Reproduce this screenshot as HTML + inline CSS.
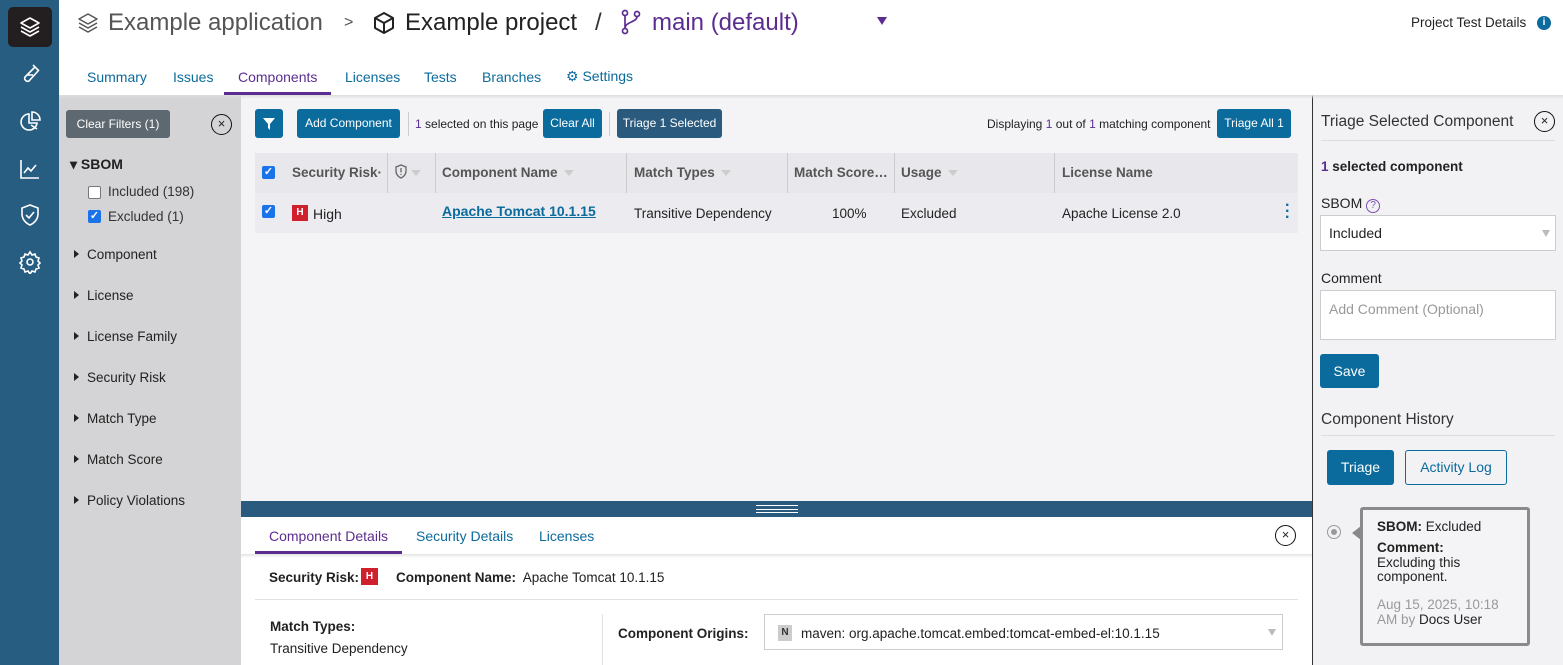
<!DOCTYPE html>
<html><head><meta charset="utf-8"><style>
*{box-sizing:border-box;margin:0;padding:0}
body{width:1563px;height:665px;overflow:hidden;font-family:"Liberation Sans",sans-serif;font-size:13px;color:#222;background:#fff;position:relative}
.a{position:absolute;white-space:nowrap}
.btn{position:absolute;background:#0b6b9c;color:#fff;border-radius:3px;font-size:12px;text-align:center}
.pur{color:#5c2d91}
.lnk{color:#0b6b9c}
.cb{position:absolute;width:13px;height:13px;border-radius:2px;background:#1a73e8;color:#fff;font-size:11px;line-height:13px;text-align:center;font-weight:bold}
.cbe{position:absolute;width:13px;height:13px;border:1px solid #777;border-radius:2px;background:#fff}
.th{position:absolute;top:165px;font-weight:bold;color:#555;font-size:13.5px}
.sep{position:absolute;top:153px;width:1px;height:40px;background:#ccc}
.tri{display:inline-block;width:0;height:0;border-left:5px solid transparent;border-right:5px solid transparent;border-top:6px solid #ccc;vertical-align:middle;margin-left:6px}
.fi{position:absolute;left:74px;font-size:13.5px;color:#222}
.fi:before{content:"";display:inline-block;border-top:4px solid transparent;border-bottom:4px solid transparent;border-left:5px solid #222;margin-right:8px;vertical-align:1px}
.xc{position:absolute;width:21px;height:21px;border:1.5px solid #111;border-radius:50%;text-align:center;line-height:17px;font-size:13px}
</style></head><body>
<!-- sidebar -->
<div class="a" style="left:0;top:0;width:59px;height:665px;background:#265d80"></div>
<div class="a" style="left:8px;top:7px;width:44px;height:40px;background:#231f20;border-radius:5px"></div>
<svg class="a" style="left:18px;top:15px" width="24" height="24" viewBox="0 0 24 24" fill="none" stroke="#fff" stroke-width="1.6" stroke-linejoin="round"><path d="M12 3 21 8 12 13 3 8Z"/><path d="M3 12l9 5 9-5"/><path d="M3 16l9 5 9-5"/></svg>
<svg class="a" style="left:18px;top:62px" width="24" height="24" viewBox="0 0 24 24" fill="none" stroke="#fff" stroke-width="1.6"><path d="M15 3l6 6M17 5 7 15a3 3 0 0 0 4 4L20 9M9 13h6"/></svg>
<svg class="a" style="left:18px;top:110px" width="24" height="24" viewBox="0 0 24 24" fill="none" stroke="#fff" stroke-width="1.6"><path d="M11 4a8 8 0 1 0 8 9h-8z"/><path d="M14 2v8h8a8 8 0 0 0-8-8z"/><path d="M13 15l6 4"/></svg>
<svg class="a" style="left:18px;top:157px" width="24" height="24" viewBox="0 0 24 24" fill="none" stroke="#fff" stroke-width="1.6"><path d="M3 3v18h18"/><path d="M6 16l4-5 3 3 5-6"/></svg>
<svg class="a" style="left:18px;top:203px" width="24" height="24" viewBox="0 0 24 24" fill="none" stroke="#fff" stroke-width="1.6"><path d="M12 2l8 3v6c0 5-3.5 9-8 11-4.5-2-8-6-8-11V5z"/><path d="M8 12l3 3 5-6"/></svg>
<svg class="a" style="left:18px;top:250px" width="24" height="24" viewBox="0 0 24 24" fill="none" stroke="#fff" stroke-width="1.6"><circle cx="12" cy="12" r="3"/><path d="M12 2l2 3 3-1 1 3 3 1-1 3 2 2-2 2 1 3-3 1-1 3-3-1-2 3-2-3-3 1-1-3-3-1 1-3-2-2 2-2-1-3 3-1 1-3 3 1z"/></svg>
<!-- header -->
<svg class="a" style="left:76px;top:11px" width="24" height="24" viewBox="0 0 24 24" fill="none" stroke="#555" stroke-width="1.5" stroke-linejoin="round"><path d="M12 3 21 8 12 13 3 8Z"/><path d="M3 12l9 5 9-5"/><path d="M3 16l9 5 9-5"/></svg>
<div class="a" style="left:108px;top:9px;font-size:24px;color:#555">Example application</div>
<div class="a" style="left:344px;top:14px;font-size:16px;color:#555">&gt;</div>
<svg class="a" style="left:372px;top:11px" width="24" height="24" viewBox="0 0 24 24" fill="none" stroke="#222" stroke-width="2" stroke-linejoin="round"><path d="M12 2 21 7v10l-9 5-9-5V7z"/><path d="M3 7l9 5 9-5M12 12v10"/></svg>
<div class="a" style="left:405px;top:9px;font-size:24px;color:#222">Example project</div>
<div class="a" style="left:595px;top:9px;font-size:24px;color:#333">/</div>
<svg class="a" style="left:619px;top:9px" width="24" height="26" viewBox="0 0 24 26" fill="none" stroke="#5c2d91" stroke-width="1.7"><circle cx="6" cy="4" r="2.5"/><circle cx="6" cy="22" r="2.5"/><circle cx="18" cy="5" r="2.5"/><path d="M6 6.5v13M18 7.5c0 6-12 5-12 12"/></svg>
<div class="a pur" style="left:652px;top:9px;font-size:24px">main (default)</div>
<div class="a" style="left:877px;top:17px;border-left:5px solid transparent;border-right:5px solid transparent;border-top:8px solid #5c2d91"></div>
<div class="a" style="left:1411px;top:15px;font-size:13.5px">Project Test Details</div>
<div class="a" style="left:1537px;top:16px;width:14px;height:14px;border-radius:50%;background:#0b6b9c;color:#fff;font-size:10px;font-weight:bold;text-align:center;line-height:14px">i</div>
<div class="a lnk" style="left:87px;top:69px;font-size:14px">Summary</div>
<div class="a lnk" style="left:173px;top:69px;font-size:14px">Issues</div>
<div class="a pur" style="left:238px;top:69px;font-size:14px">Components</div>
<div class="a" style="left:224px;top:92px;width:107px;height:3px;background:#5c2d91"></div>
<div class="a lnk" style="left:345px;top:69px;font-size:14px">Licenses</div>
<div class="a lnk" style="left:424px;top:69px;font-size:14px">Tests</div>
<div class="a lnk" style="left:482px;top:69px;font-size:14px">Branches</div>
<div class="a lnk" style="left:566px;top:68px;font-size:14px">⚙ Settings</div>
<div class="a" style="left:59px;top:95px;width:1504px;height:4px;background:linear-gradient(#ddd,transparent);z-index:2"></div>
<!-- filter panel -->
<div class="a" style="left:59px;top:95px;width:182px;height:570px;background:#d4d3d5"></div>
<div class="a" style="left:66px;top:110px;width:104px;height:28px;background:#5d6870;border-radius:3px;color:#fff;font-size:12px;text-align:center;line-height:28px">Clear Filters (1)</div>
<div class="xc" style="left:211px;top:114px">×</div>
<div class="a" style="left:70px;top:156px;font-weight:bold;font-size:14px">▾ SBOM</div>
<div class="cbe" style="left:88px;top:186px"></div><div class="a" style="left:108px;top:184px;font-size:13.5px;color:#333">Included (198)</div>
<div class="cb" style="left:88px;top:210px">✓</div><div class="a" style="left:108px;top:209px;font-size:13.5px;color:#333">Excluded (1)</div>
<div class="fi" style="top:247px">Component</div>
<div class="fi" style="top:288px">License</div>
<div class="fi" style="top:329px">License Family</div>
<div class="fi" style="top:370px">Security Risk</div>
<div class="fi" style="top:411px">Match Type</div>
<div class="fi" style="top:452px">Match Score</div>
<div class="fi" style="top:493px">Policy Violations</div>
<!-- main -->
<div class="a" style="left:241px;top:95px;width:1071px;height:406px;background:#f4f4f7"></div>
<div class="btn" style="left:255px;top:109px;width:28px;height:29px"><svg width="14" height="14" style="margin-top:8px" viewBox="0 0 14 14"><path d="M1 1h12L8 7v6L6 11V7z" fill="#fff"/></svg></div>
<div class="btn" style="left:297px;top:109px;width:103px;height:29px;line-height:29px">Add Component</div>
<div class="a" style="left:408px;top:112px;width:1px;height:24px;background:#ccc"></div>
<div class="a" style="left:415px;top:117px;font-size:12px"><span class="pur">1</span> selected on this page</div>
<div class="btn" style="left:543px;top:109px;width:59px;height:29px;line-height:29px">Clear All</div>
<div class="a" style="left:609px;top:112px;width:1px;height:24px;background:#ccc"></div>
<div class="btn" style="left:617px;top:109px;width:105px;height:29px;line-height:29px;background:#2a5b7e">Triage 1 Selected</div>
<div class="a" style="left:987px;top:117px;font-size:12px">Displaying <span class="pur">1</span> out of <span class="pur">1</span> matching component</div>
<div class="btn" style="left:1217px;top:109px;width:74px;height:29px;line-height:29px">Triage All 1</div>
<div class="a" style="left:255px;top:153px;width:1043px;height:40px;background:#e8e8ec"></div>
<div class="a" style="left:255px;top:193px;width:1043px;height:40px;background:#ececf0"></div>
<div class="cb" style="left:262px;top:166px">✓</div>
<div class="th" style="left:292px">Security Risk·</div>
<div class="sep" style="left:387px"></div>
<svg class="a" style="left:394px;top:164px" width="14" height="15" viewBox="0 0 14 15" fill="none" stroke="#666" stroke-width="1.3"><path d="M7 1l5 2v4c0 3.5-2.5 6-5 7-2.5-1-5-3.5-5-7V3z"/><path d="M7 4v4.5M7 10v1"/></svg>
<div class="a" style="left:411px;top:170px;border-left:5px solid transparent;border-right:5px solid transparent;border-top:6px solid #ccc"></div>
<div class="sep" style="left:435px"></div>
<div class="th" style="left:442px">Component Name<span class="tri"></span></div>
<div class="sep" style="left:626px"></div>
<div class="th" style="left:634px">Match Types<span class="tri"></span></div>
<div class="sep" style="left:787px"></div>
<div class="th" style="left:794px">Match Score…</div>
<div class="sep" style="left:894px"></div>
<div class="th" style="left:901px">Usage<span class="tri"></span></div>
<div class="sep" style="left:1054px"></div>
<div class="th" style="left:1062px">License Name</div>
<div class="cb" style="left:262px;top:205px">✓</div>
<div class="a" style="left:292px;top:205px;width:16px;height:16px;background:#d0202e;color:#fff;font-size:10px;font-weight:bold;text-align:center;line-height:16px">H</div>
<div class="a" style="left:313px;top:206px;font-size:14px">High</div>
<div class="a lnk" style="left:442px;top:203px;font-size:14px;font-weight:bold;text-decoration:underline">Apache Tomcat 10.1.15</div>
<div class="a" style="left:634px;top:206px;font-size:13.5px">Transitive Dependency</div>
<div class="a" style="left:832px;top:206px;font-size:13.5px">100%</div>
<div class="a" style="left:901px;top:206px;font-size:13.5px">Excluded</div>
<div class="a" style="left:1062px;top:206px;font-size:13.5px">Apache License 2.0</div>
<div class="a lnk" style="left:1285px;top:203px;font-size:16px;font-weight:bold;line-height:6px">·<br>·<br>·</div>
<!-- divider -->
<div class="a" style="left:241px;top:501px;width:1071px;height:16px;background:#2a5b7e"></div>
<div class="a" style="left:756px;top:505px;width:42px;height:8px;border-top:1.5px solid #fff;border-bottom:1.5px solid #fff"></div>
<div class="a" style="left:756px;top:508.5px;width:42px;height:1.5px;background:#fff"></div>
<!-- bottom -->
<div class="a pur" style="left:269px;top:528px;font-size:14px">Component Details</div>
<div class="a" style="left:255px;top:551px;width:147px;height:3px;background:#5c2d91"></div>
<div class="a lnk" style="left:416px;top:528px;font-size:14px">Security Details</div>
<div class="a lnk" style="left:539px;top:528px;font-size:14px">Licenses</div>
<div class="xc" style="left:1275px;top:525px">×</div>
<div class="a" style="left:241px;top:554px;width:1071px;height:4px;background:linear-gradient(#e4e4e4,transparent)"></div>
<div class="a" style="left:269px;top:570px;font-weight:bold;font-size:13.5px">Security Risk:</div>
<div class="a" style="left:361px;top:568px;width:17px;height:17px;background:#d0202e;color:#fff;font-size:10px;font-weight:bold;text-align:center;line-height:17px">H</div>
<div class="a" style="left:396px;top:570px;font-size:13.5px"><b>Component Name:</b>&nbsp; Apache Tomcat 10.1.15</div>
<div class="a" style="left:255px;top:599px;width:1043px;height:1px;background:#e2e2e2"></div>
<div class="a" style="left:270px;top:619px;font-weight:bold;font-size:13.5px">Match Types:</div>
<div class="a" style="left:270px;top:641px;font-size:13.5px">Transitive Dependency</div>
<div class="a" style="left:602px;top:614px;width:1px;height:51px;background:#e2e2e2"></div>
<div class="a" style="left:618px;top:626px;font-weight:bold;font-size:13.5px">Component Origins:</div>
<div class="a" style="left:764px;top:614px;width:519px;height:36px;border:1px solid #ccc;background:#fff"></div>
<div class="a" style="left:778px;top:625px;width:14px;height:16px;background:#ccc;font-size:10px;text-align:center;line-height:16px;font-weight:bold;color:#333">N</div>
<div class="a" style="left:801px;top:626px;font-size:13.5px">maven: org.apache.tomcat.embed:tomcat-embed-el:10.1.15</div>
<div class="a" style="left:1268px;top:629px;border-left:4px solid transparent;border-right:4px solid transparent;border-top:7px solid #bbb"></div>
<!-- right panel -->
<div class="a" style="left:1312px;top:95px;width:251px;height:570px;background:#f2f2f5;border-left:1px solid #333"></div>
<div class="a" style="left:1321px;top:113px;font-size:15.5px;color:#333">Triage Selected Component</div>
<div class="xc" style="left:1534px;top:111px">×</div>
<div class="a" style="left:1321px;top:140px;width:234px;height:1px;background:#ddd"></div>
<div class="a" style="left:1321px;top:159px;font-size:13.5px;font-weight:bold"><span class="pur">1</span> selected component</div>
<div class="a" style="left:1321px;top:195px;font-size:14px">SBOM <span style="display:inline-block;width:14px;height:14px;border:1px solid #7a4fb0;border-radius:50%;color:#7a4fb0;font-size:10px;text-align:center;line-height:12px">?</span></div>
<div class="a" style="left:1320px;top:215px;width:236px;height:36px;border:1px solid #ccc;background:#fff"></div>
<div class="a" style="left:1329px;top:225px;font-size:14px">Included</div>
<div class="a" style="left:1542px;top:230px;border-left:4px solid transparent;border-right:4px solid transparent;border-top:7px solid #bbb"></div>
<div class="a" style="left:1321px;top:270px;font-size:14px">Comment</div>
<div class="a" style="left:1320px;top:290px;width:236px;height:50px;border:1px solid #ccc;background:#fff"></div>
<div class="a" style="left:1329px;top:301px;font-size:14px;color:#999">Add Comment (Optional)</div>
<div class="btn" style="left:1320px;top:354px;width:59px;height:34px;line-height:34px;font-size:14px">Save</div>
<div class="a" style="left:1321px;top:411px;font-size:15.5px;color:#333">Component History</div>
<div class="a" style="left:1321px;top:435px;width:234px;height:1px;background:#ddd"></div>
<div class="btn" style="left:1327px;top:450px;width:67px;height:35px;line-height:35px;font-size:14px">Triage</div>
<div class="a lnk" style="left:1405px;top:450px;width:102px;height:35px;border:1px solid #0b6b9c;border-radius:3px;text-align:center;line-height:33px;font-size:14px">Activity Log</div>
<div class="a" style="left:1327px;top:525px;width:14px;height:14px;border:1.5px solid #999;border-radius:50%"></div>
<div class="a" style="left:1331px;top:529px;width:6px;height:6px;background:#999;border-radius:50%"></div>
<div class="a" style="left:1352px;top:526px;border-top:7px solid transparent;border-bottom:7px solid transparent;border-right:9px solid #888"></div>
<div class="a" style="left:1360px;top:507px;width:170px;height:139px;border:3px solid #8a8a8a;border-radius:3px;background:#f4f4f6"></div>
<div class="a" style="left:1377px;top:519px;font-size:13.5px;line-height:15px"><b>SBOM:</b> Excluded</div>
<div class="a" style="left:1377px;top:541px;font-size:13.5px;line-height:14.5px"><b>Comment:</b><br>Excluding this<br>component.</div>
<div class="a" style="left:1377px;top:597px;font-size:13.5px;line-height:15px;color:#999">Aug 15, 2025, 10:18<br>AM by <span style="color:#222">Docs User</span></div>
</body></html>
